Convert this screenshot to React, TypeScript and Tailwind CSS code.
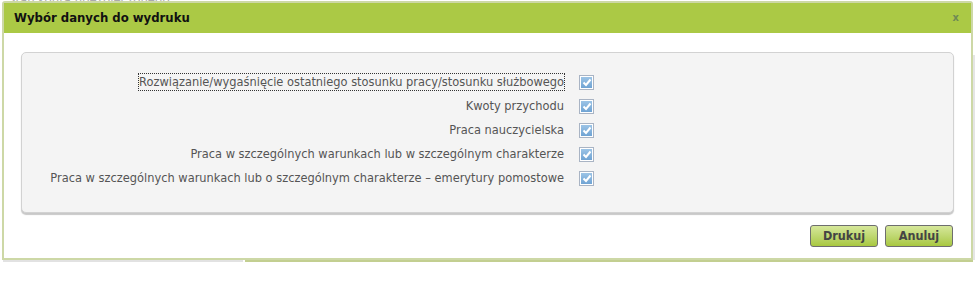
import React from "react";

const rows = [
  "Rozwiązanie/wygaśnięcie ostatniego stosunku pracy/stosunku służbowego",
  "Kwoty przychodu",
  "Praca nauczycielska",
  "Praca w szczególnych warunkach lub w szczególnym charakterze",
  "Praca w szczególnych warunkach lub o szczególnym charakterze – emerytury pomostowe",
];

function Check() {
  return (
    <span className="flex h-[15px] w-[15px] shrink-0 items-center justify-center border border-[#a9b4c4] bg-white">
      <span className="flex h-[11px] w-[11px] items-center justify-center bg-gradient-to-b from-[#9cc4e6] to-[#6fa3d3]">
        <svg width="10" height="9" viewBox="0 0 10 9">
          <path d="M1.5 4.5 L4 7 L8.5 1.5" fill="none" stroke="#fff" strokeWidth="2" />
        </svg>
      </span>
    </span>
  );
}

export default function App() {
  return (
    <div
      className="relative h-[291px] w-[975px] overflow-hidden bg-white text-[#555]"
      style={{ fontFamily: '"DejaVu Sans Condensed", "DejaVu Sans", sans-serif' }}
    >
      {/* page behind the dialog */}
      <div className="absolute left-[8px] top-[-10px] text-[13px] text-[#aaa]">Stan konta ubezpieczonego</div>
      <div className="absolute left-[3px] top-[259px] h-[3px] w-[240px] bg-[#e2e2e2]" />
      <div className="absolute left-[245px] top-[259px] h-[3px] w-[728px] bg-[#c3cf91]" />
      <div className="absolute left-[972px] top-[55px] h-[205px] w-[3px] bg-[#e5e5e5]" />

      <div className="absolute left-[2px] top-[1px] flex h-[259px] w-[971px] flex-col rounded-t-[3px] border-[2px] border-[#cdd8a6] bg-white">
        <div className="flex h-[30px] shrink-0 items-center justify-between bg-[#abc945] pl-[10px] pr-[12px]">
          <span className="text-[13px] font-bold text-[#111]">Wybór danych do wydruku</span>
          <span className="text-[11px] font-bold text-[#6f8a55]">x</span>
        </div>
        <div className="flex flex-1 flex-col px-[17px] pt-[19px]">
          <div className="flex h-[161px] flex-col items-start rounded-[5px] border border-[#d2d2d2] bg-[#f4f4f4] pt-[17px] shadow-[0_2px_1px_#c8c8c8]">
            {rows.map((r, i) => (
              <div key={r} className="flex h-[24px] w-[572px] items-center justify-end gap-[15px]">
                <span
                  className={
                    "whitespace-nowrap text-[12.7px] leading-[16px] " +
                    (i === 0 ? "outline outline-1 outline-dotted outline-[#333]" : "")
                  }
                >
                  {r}
                </span>
                <Check />
              </div>
            ))}
          </div>
          <div className="mt-[12px] flex justify-end gap-[7px] pr-[1px]">
            {["Drukuj", "Anuluj"].map((b) => (
              <button
                key={b}
                className="h-[22px] w-[68px] rounded-[3px] border border-[#6e6e6e] bg-gradient-to-b from-[#d6e79a] to-[#a8c83e] text-[12.5px] font-bold text-[#444]"
              >
                {b}
              </button>
            ))}
          </div>
        </div>
      </div>
    </div>
  );
}
